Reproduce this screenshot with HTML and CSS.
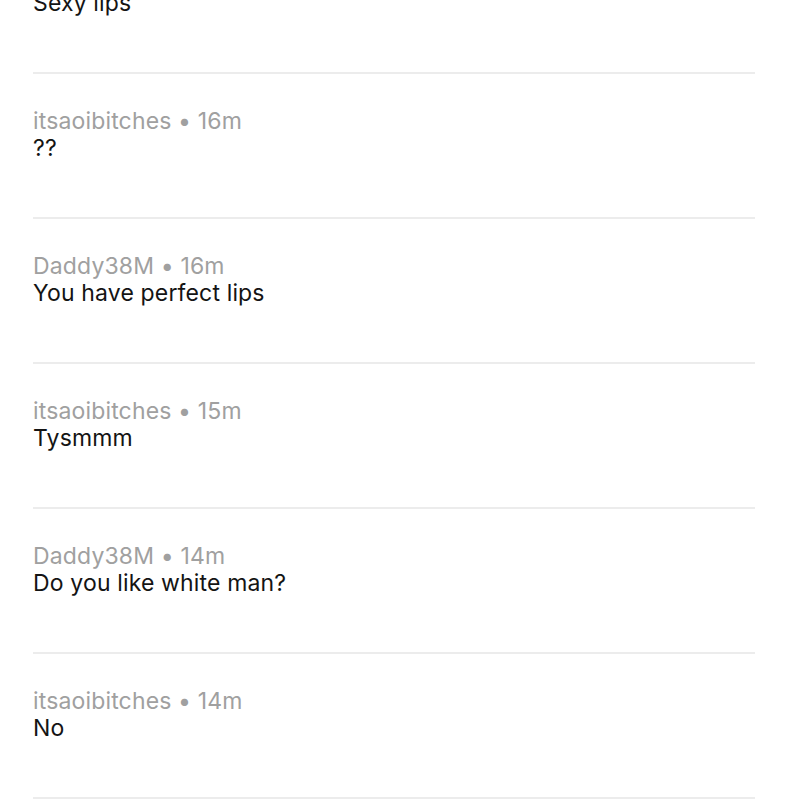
FILE: index.html
```html
<!DOCTYPE html>
<html>
<head>
<meta charset="utf-8">
<link rel="stylesheet" href="styles.css">
</head>
<body>
<ul class="comments">
  <li class="comment">
    <div class="meta">Daddy38M • 17m</div>
    <div class="text">Sexy lips</div>
  </li>
  <li class="comment">
    <div class="meta">itsaoibitches • 16m</div>
    <div class="text">??</div>
  </li>
  <li class="comment">
    <div class="meta">Daddy38M • 16m</div>
    <div class="text">You have perfect lips</div>
  </li>
  <li class="comment">
    <div class="meta">itsaoibitches • 15m</div>
    <div class="text">Tysmmm</div>
  </li>
  <li class="comment">
    <div class="meta">Daddy38M • 14m</div>
    <div class="text">Do you like white man?</div>
  </li>
  <li class="comment">
    <div class="meta">itsaoibitches • 14m</div>
    <div class="text">No</div>
  </li>
</ul>
</body>
</html>
```
FILE: styles.css
```css
html, body {
  margin: 0;
  padding: 0;
  background: #ffffff;
  overflow: hidden;
}
body {
  font-family: Inter, "Noto Sans", "Liberation Sans", sans-serif;
  font-size: 23px;
  line-height: 27px;
  letter-spacing: 0.15px;
}
.comments {
  list-style: none;
  margin: -71px 34px 0 33px;
  padding: 0;
}
.comment {
  padding: 34px 0 55px;
  border-bottom: 2px solid #ececec;
}
.meta {
  color: #a0a0a0;
}
.text {
  color: #141414;
}
```
